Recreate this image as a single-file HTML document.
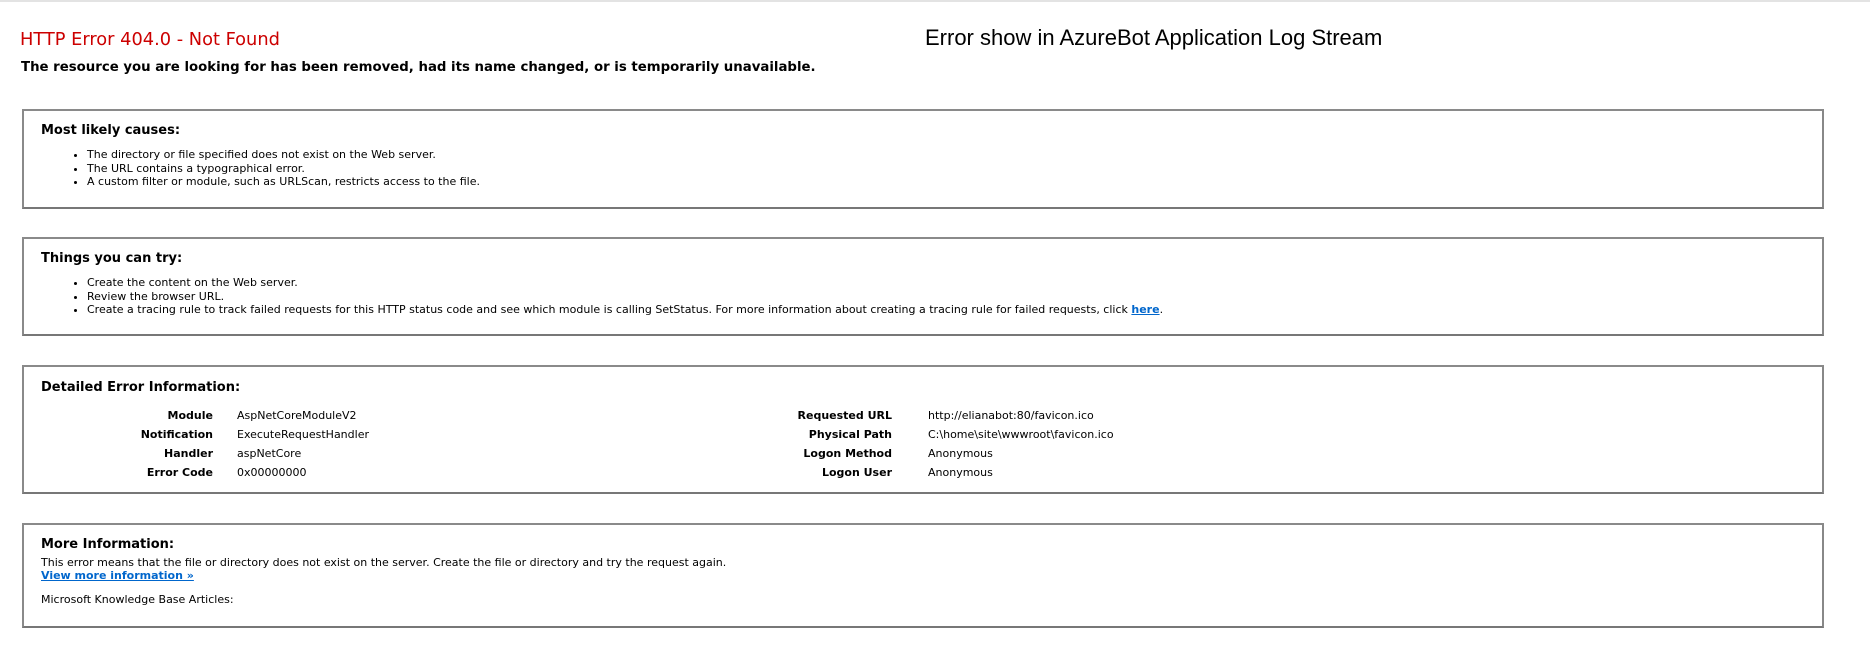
<!DOCTYPE html>
<html><head><meta charset="utf-8"><style>
*{margin:0;padding:0;box-sizing:border-box}
body{width:1870px;height:663px;background:#fff;position:relative;overflow:hidden;font-family:"DejaVu Sans",Verdana,sans-serif;color:#000}
.topline{position:absolute;left:0;top:0;width:1870px;height:2px;background:#e3e3e3}
.a{position:absolute;white-space:nowrap}
.box{position:absolute;left:22px;width:1802px;border:2px solid #8a8a8a;border-bottom-color:#777;border-right-color:#888}
h3{position:absolute;left:17px;font-size:13px;font-weight:bold;white-space:nowrap}
ul{position:absolute;left:63px;font-size:11px;line-height:13.5px;list-style:disc;white-space:nowrap}
a{color:#0066cc;font-weight:bold;text-decoration:underline}
.l{position:absolute;font-size:11px;font-weight:bold;text-align:right;white-space:nowrap}
.v{position:absolute;font-size:11px;white-space:nowrap}
</style></head><body>
<div class="topline"></div>
<div class="a" style="left:20px;top:29px;font-size:17.8px;color:#cc0000">HTTP Error 404.0 - Not Found</div>
<div class="a" style="left:925px;top:25px;font-family:'Liberation Sans',sans-serif;font-size:22px">Error show in AzureBot Application Log Stream</div>
<div class="a" style="left:21px;top:60px;font-size:13.3px;font-weight:bold">The resource you are looking for has been removed, had its name changed, or is temporarily unavailable.</div>

<div class="box" style="top:109px;height:100px">
<h3 style="top:12px">Most likely causes:</h3>
<ul style="top:37px"><li>The directory or file specified does not exist on the Web server.</li><li>The URL contains a typographical error.</li><li>A custom filter or module, such as URLScan, restricts access to the file.</li></ul>
</div>

<div class="box" style="top:237px;height:99px">
<h3 style="top:12px">Things you can try:</h3>
<ul style="top:37px"><li>Create the content on the Web server.</li><li>Review the browser URL.</li><li>Create a tracing rule to track failed requests for this HTTP status code and see which module is calling SetStatus. For more information about creating a tracing rule for failed requests, click <a>here</a>.</li></ul>
</div>

<div class="box" style="top:365px;height:129px">
<h3 style="top:13px">Detailed Error Information:</h3>
<div class="l" style="right:1609px;top:39px;width:170px;line-height:19px">Module<br>Notification<br>Handler<br>Error Code</div>
<div class="v" style="left:213px;top:39px;line-height:19px">AspNetCoreModuleV2<br>ExecuteRequestHandler<br>aspNetCore<br>0x00000000</div>
<div class="l" style="right:930px;top:39px;width:170px;line-height:19px">Requested URL<br>Physical Path<br>Logon Method<br>Logon User</div>
<div class="v" style="left:904px;top:39px;line-height:19px">http://elianabot:80/favicon.ico<br>C:\home\site\wwwroot\favicon.ico<br>Anonymous<br>Anonymous</div>
</div>

<div class="box" style="top:523px;height:105px">
<h3 style="top:12px">More Information:</h3>
<div class="v" style="left:17px;top:31px">This error means that the file or directory does not exist on the server. Create the file or directory and try the request again.</div>
<div class="v" style="left:17px;top:44px"><a>View more information »</a></div>
<div class="v" style="left:17px;top:68px">Microsoft Knowledge Base Articles:</div>
</div>
</body></html>
